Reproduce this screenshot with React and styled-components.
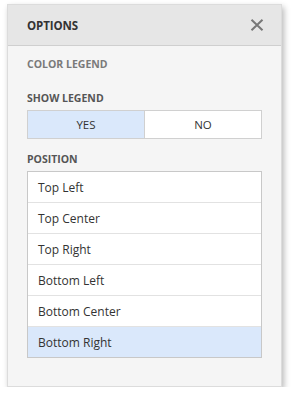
import React, { useState } from "react";
import styled, { createGlobalStyle } from "styled-components";

const GlobalStyle = createGlobalStyle`
  body {
    margin: 0;
    background: #ffffff;
    font-family: "Open Sans", "Noto Sans", sans-serif;
  }
`;

const Panel = styled.div`
  margin: 4px 0 0 7px;
  width: 275px;
  height: 383px;
  box-sizing: border-box;
  background: #f5f5f5;
  border: 1px solid #dcdcdc;
  box-shadow: 2px 3px 6px rgba(0, 0, 0, 0.28);
  display: flex;
  flex-direction: column;
`;

const Header = styled.div`
  height: 40px;
  flex: none;
  display: flex;
  align-items: center;
  justify-content: space-between;
  padding: 0 16px 0 19px;
  background: #e6e6e6;
  border-bottom: 1px solid #cfcfcf;
`;

const Title = styled.div`
  font-size: 11.5px;
  font-weight: 700;
  color: #333333;
  letter-spacing: -0.1px;
`;

const Close = styled.button`
  border: 0;
  background: none;
  padding: 0;
  width: 16px;
  height: 16px;
  display: flex;
  align-items: center;
  justify-content: center;
  cursor: pointer;
`;

const Body = styled.div`
  padding: 11px 19px 0 19px;
  display: flex;
  flex-direction: column;
`;

const Section = styled.div`
  font-size: 10.5px;
  font-weight: 700;
  color: ${(p) => (p.$muted ? "#7a7a7a" : "#555555")};
  margin-bottom: ${(p) => p.$gap}px;
  line-height: 14px;
`;

const Toggle = styled.div`
  display: flex;
  height: 29px;
  border: 1px solid #d0d0d0;
  box-sizing: border-box;
  margin-bottom: 13px;
`;

const ToggleButton = styled.button`
  flex: 1;
  border: 0;
  border-left: ${(p) => (p.$first ? "0" : "1px solid #d0d0d0")};
  background: ${(p) => (p.$active ? "#dae8fb" : "#ffffff")};
  font-family: inherit;
  font-size: 11.5px;
  color: #333333;
  padding: 0;
  cursor: pointer;
`;

const List = styled.div`
  border: 1px solid #c8c8c8;
  background: #ffffff;
  display: flex;
  flex-direction: column;
`;

const Row = styled.div`
  height: 30px;
  display: flex;
  align-items: center;
  padding-left: 10px;
  font-size: 12px;
  color: #333333;
  background: ${(p) => (p.$active ? "#dae8fb" : "#ffffff")};
  border-top: ${(p) => (p.$first ? "0" : "1px solid #e2e2e2")};
  cursor: pointer;
`;

const positions = [
  "Top Left",
  "Top Center",
  "Top Right",
  "Bottom Left",
  "Bottom Center",
  "Bottom Right",
];

export default function App() {
  const [show, setShow] = useState(true);
  const [position, setPosition] = useState("Bottom Right");

  return (
    <>
      <GlobalStyle />
      <Panel>
        <Header>
          <Title>OPTIONS</Title>
          <Close aria-label="close">
            <svg width="14" height="12" viewBox="0 0 14 12">
              <path
                d="M1.5 0.8 L12.5 11.2 M12.5 0.8 L1.5 11.2"
                stroke="#777777"
                strokeWidth="2"
                fill="none"
              />
            </svg>
          </Close>
        </Header>
        <Body>
          <Section $muted $gap={20}>COLOR LEGEND</Section>
          <Section $gap={5}>SHOW LEGEND</Section>
          <Toggle>
            <ToggleButton $first $active={show} onClick={() => setShow(true)}>
              YES
            </ToggleButton>
            <ToggleButton $active={!show} onClick={() => setShow(false)}>
              NO
            </ToggleButton>
          </Toggle>
          <Section $gap={5}>POSITION</Section>
          <List>
            {positions.map((p, i) => (
              <Row
                key={p}
                $first={i === 0}
                $active={p === position}
                onClick={() => setPosition(p)}
              >
                {p}
              </Row>
            ))}
          </List>
        </Body>
      </Panel>
    </>
  );
}
